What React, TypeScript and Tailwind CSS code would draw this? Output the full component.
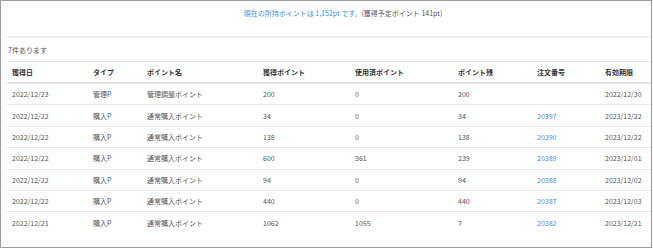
import React from "react";

type Row = {
  date: string;
  type: string;
  name: string;
  earned: string;
  used: string;
  remain: string;
  order: string;
  expiry: string;
};

const rows: Row[] = [
  { date: "2022/12/23", type: "管理P", name: "管理調整ポイント", earned: "200", used: "0", remain: "200", order: "", expiry: "2022/12/30" },
  { date: "2022/12/22", type: "購入P", name: "通常購入ポイント", earned: "34", used: "0", remain: "34", order: "20397", expiry: "2023/12/22" },
  { date: "2022/12/22", type: "購入P", name: "通常購入ポイント", earned: "138", used: "0", remain: "138", order: "20390", expiry: "2023/12/22" },
  { date: "2022/12/22", type: "購入P", name: "通常購入ポイント", earned: "600", used: "361", remain: "239", order: "20389", expiry: "2023/12/01" },
  { date: "2022/12/22", type: "購入P", name: "通常購入ポイント", earned: "94", used: "0", remain: "94", order: "20388", expiry: "2023/12/02" },
  { date: "2022/12/22", type: "購入P", name: "通常購入ポイント", earned: "440", used: "0", remain: "440", order: "20387", expiry: "2023/12/03" },
  { date: "2022/12/21", type: "購入P", name: "通常購入ポイント", earned: "1062", used: "1055", remain: "7", order: "20382", expiry: "2023/12/21" },
];

const headers = ["獲得日", "タイプ", "ポイント名", "獲得ポイント", "使用済ポイント", "ポイント残", "注文番号", "有効期限"];

const gridCols = "grid grid-cols-[81px_54px_116px_92px_103px_79px_68px_1fr]";

export default function App() {
  return (
    <div
      className="w-[652px] h-[248px] border border-[#9c9c9c] bg-white overflow-hidden text-[7px]"
      style={{ fontFamily: '"Noto Sans CJK JP", "Noto Sans", sans-serif' }}
    >
      <div className="h-[35px] pt-[8px] leading-[9px] text-center pl-[34px]">
        <span className="text-[#3d8ee8]">現在の所持ポイントは 1,152pt です。</span>
        <span className="text-[#555]">(獲得予定ポイント 141pt)</span>
      </div>
      <div className="ml-[6px] border-t-2 border-[#ececec]" />
      <div className="pl-[6px]">
        <div className="h-[23px] pt-[7px] leading-[10px] pl-[1px] text-[#555]">7件あります</div>
        <div className="border-t border-[#e6e6e6]">
          <div className={`${gridCols} h-[22px] border-b-2 border-[#e2e2e2] items-center text-[#333] font-bold`}>
            {headers.map((h) => (
              <div key={h} className="pl-[5px] leading-[10px]">{h}</div>
            ))}
          </div>
          {rows.map((r, i) => (
            <div
              key={i}
              className={`${gridCols} h-[21.4px] items-center text-[#555] ${i < rows.length - 1 ? "border-b border-[#e8e8e8]" : ""}`}
            >
              <div className="pl-[5px] leading-[10px]">{r.date}</div>
              <div className="pl-[5px] leading-[10px]">{r.type}</div>
              <div className="pl-[5px] leading-[10px]">{r.name}</div>
              <div className="pl-[5px] leading-[10px]">{r.earned}</div>
              <div className="pl-[5px] leading-[10px]">{r.used}</div>
              <div className="pl-[5px] leading-[10px]">{r.remain}</div>
              <div className="pl-[5px] leading-[10px] text-[#3d8ee8]">{r.order}</div>
              <div className="pl-[5px] leading-[10px]">{r.expiry}</div>
            </div>
          ))}
        </div>
      </div>
    </div>
  );
}
